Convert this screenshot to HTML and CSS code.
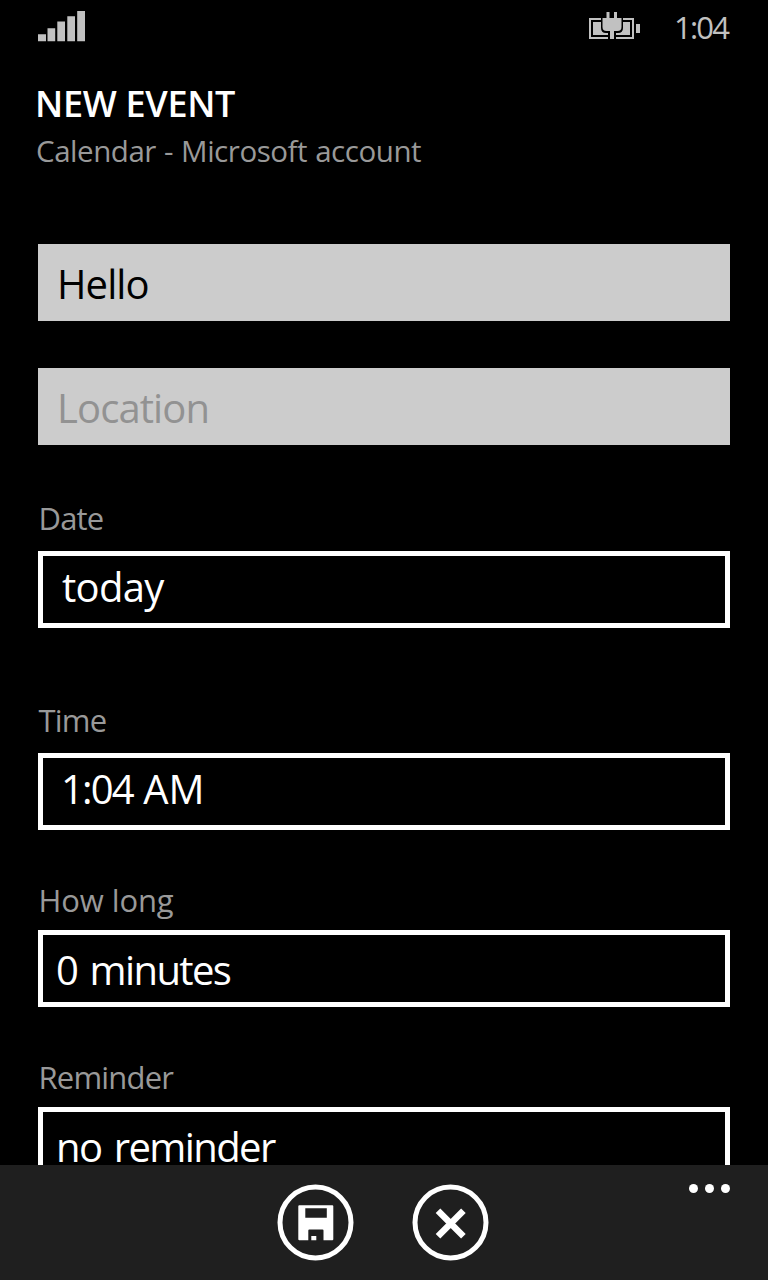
FILE: index.html
```html
<!DOCTYPE html>
<html lang="en">
<head>
<meta charset="utf-8">
<title>New event</title>
<link rel="stylesheet" href="styles.css">
</head>
<body>
<div class="phone">
  <header class="status">
    <svg class="signal" width="48" height="32" viewBox="0 0 48 32" fill="#c1c1c1">
      <path d="M0 24.3h8v7H0zM9.5 18.3h7.7v13H9.5zM19.3 11.5h7.7v19.8h-7.7zM29.3 6.3h7.7v25h-7.7zM39.2 1h7.8v30.3h-7.8z"/>
    </svg>
    <svg class="battery" width="52" height="28" viewBox="0 0 52 28" fill="#c1c1c1">
      <path d="M0 6h12v2H2v17h17v2H0zM34 6h11v21H27v-2h16V8h-9zM47 12h4v9h-4z"/>
      <path d="M4 10h8v6q0 5 5 5h2v2H4zM41 10h-7v6q0 5-5 5h-2v2h14z"/>
      <path d="M17.500 0h3v6H25V0h3v6h4.500v9q0 4-4 4H25v8h-4v-8h-3.500q-4 0-4-4V6h4z"/>
    </svg>
    <span class="clock">1:04</span>
  </header>
  <main class="form">
    <h1 class="title">NEW EVENT</h1>
    <p class="account">Calendar - Microsoft account</p>
    <div class="input subject"><span class="hello">Hello</span></div>
    <div class="input location"><span class="placeholder">Location</span></div>
    <div class="label date-label"><span>Date</span></div>
    <div class="picker"><span class="today">today</span></div>
    <div class="label time-label"><span>Time</span></div>
    <div class="picker"><span class="hour">1:04</span> AM</div>
    <div class="label long-label"><span>How long</span></div>
    <div class="picker list"><span class="minutes">0 minutes</span></div>
    <div class="label reminder-label"><span>Reminder</span></div>
    <div class="picker list"><span class="reminder">no reminder</span></div>
  </main>
  <footer class="appbar">
    <svg class="action" width="78" height="78" viewBox="0 0 78 78">
      <circle cx="38.5" cy="39.5" r="35.5" fill="none" stroke="#fff" stroke-width="5"/>
      <path fill="#fff" fill-rule="evenodd" d="M22.300 22.300h33q1 0 1 1v33q0 1-1 1h-8.800V47.500q0-1-1-1H32.300q-1 0-1 1v9.800h-9q-1 0-1-1v-33q0-1 1-1zM28.300 25.300v9.500h21.500v-9.500zM34.300 53h5v4.300h-5z"/>
    </svg>
    <svg class="action" width="78" height="78" viewBox="0 0 78 78">
      <circle cx="38.5" cy="39.5" r="35.5" fill="none" stroke="#fff" stroke-width="5"/>
      <path d="M26 27.800l25.400 25.400M51.400 27.800L26 53.200" stroke="#fff" stroke-width="6.500"/>
    </svg>
    <svg class="more" width="42" height="10" viewBox="0 0 42 10" fill="#fff">
      <circle cx="4.500" cy="5.500" r="4.500"/><circle cx="20.500" cy="5.500" r="4.500"/><circle cx="36.500" cy="5.500" r="4.500"/>
    </svg>
  </footer>
</div>
</body>
</html>
```
FILE: styles.css
```css
* { box-sizing: border-box; }
body { margin: 0; background: #000; }
.phone {
  width: 768px; height: 1280px; overflow: hidden;
  display: flex; flex-direction: column;
  background: #000; color: #fff;
  font-family: "Open Sans", "Noto Sans", sans-serif;
  white-space: nowrap;
}
.status { flex: none; height: 60px; padding: 10px 40px 0 38px; display: flex; align-items: flex-start; color: #c1c1c1; }
.battery { margin: 2px 33px 0 auto; }
.clock { width: 54px; font-size: 31px; line-height: 34px; font-weight: 400; letter-spacing: -1.8px; }
.form { flex: none; height: 1105px; overflow: hidden; padding: 22px 38px 0; }
.title { margin: 0 0 0 -3px; font-size: 36px; line-height: 44px; font-weight: 600; letter-spacing: -0.3px; }
.account { margin: 2px 0 71px -2px; font-size: 29.5px; line-height: 45px; color: #999; letter-spacing: -0.45px; word-spacing: 0.8px; }
.input, .picker { height: 77px; font-size: 40px; line-height: 80px; }
.input { background: #ccc; color: #000; padding-left: 19px; letter-spacing: -0.9px; }
.location { margin-top: 47px; }
.placeholder { color: #929292; }
.picker { border: 5px solid #fff; padding-left: 19px; line-height: 62px; }
.today { letter-spacing: -0.7px; }
.hour { margin-left: -1px; letter-spacing: -1.8px; }
.list { padding-left: 13px; line-height: 70px; letter-spacing: -1.6px; word-spacing: 3.5px; }
.label { font-size: 31px; line-height: 47px; color: #999; letter-spacing: -0.8px; }
.label span { margin-left: 0.5px; }
.date-label { margin: 50px 0 9px; }
.time-label { margin: 69px 0 9px; }
.long-label { margin: 47px 0 6px; letter-spacing: -0.1px; }
.reminder-label { margin: 47px 0 6px; }
.appbar { flex: none; height: 115px; background: #1f1f1f; display: flex; justify-content: center; gap: 57px; padding: 18px 2px 0 0; position: relative; }
.more { position: absolute; right: 37px; top: 18px; }
```
